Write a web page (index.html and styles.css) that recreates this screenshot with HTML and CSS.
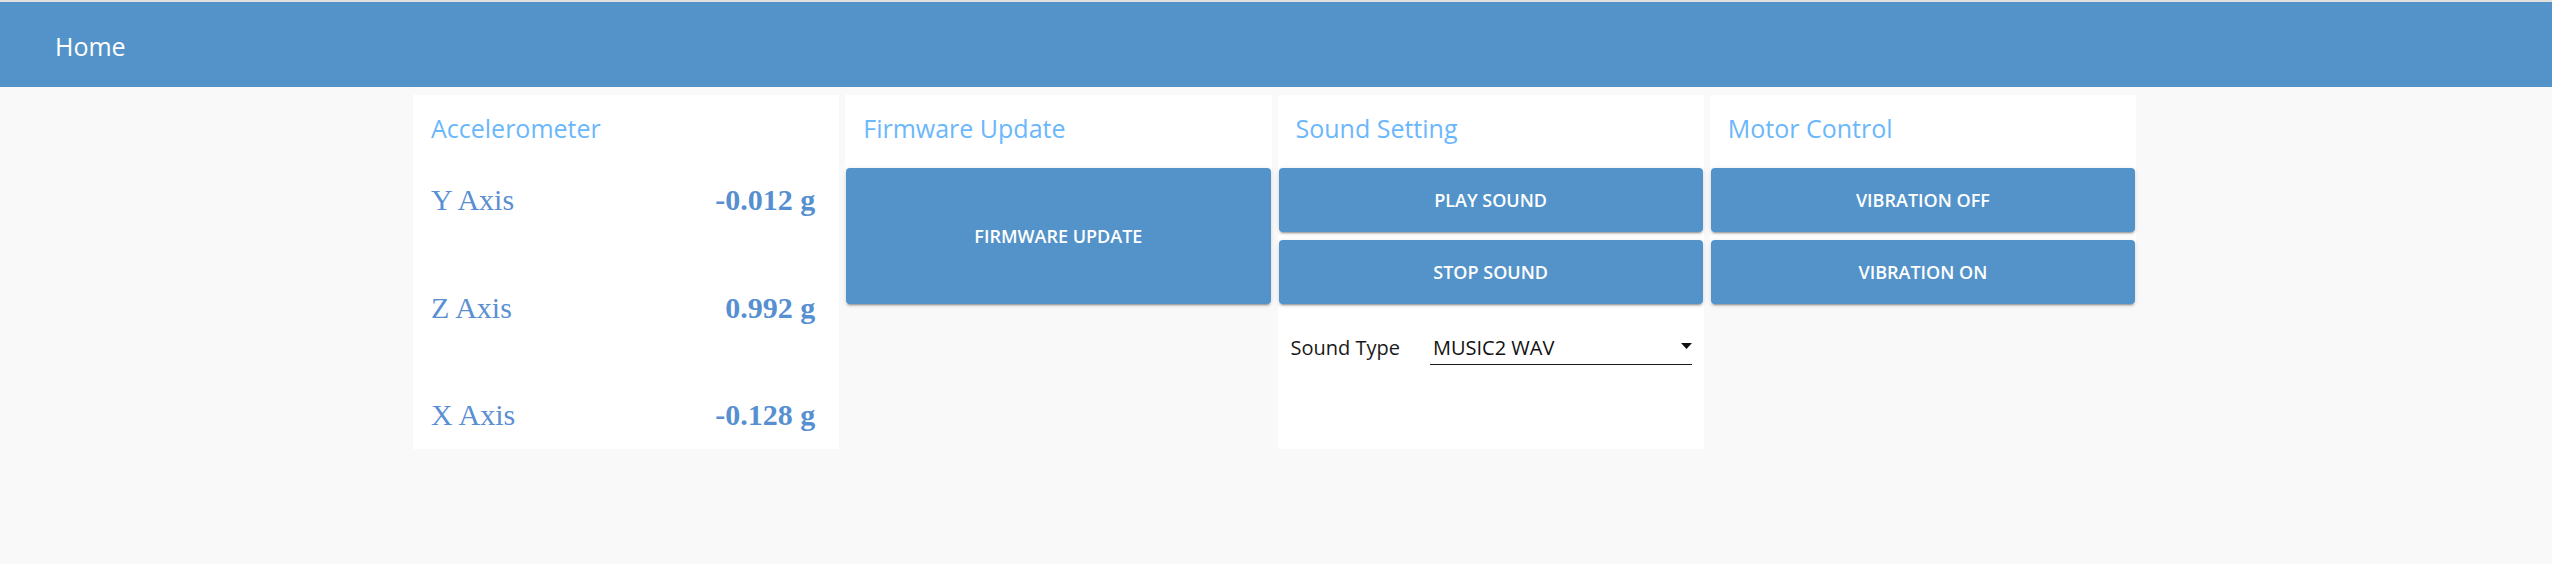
FILE: index.html
```html
<!DOCTYPE html>
<html lang="en">
<head>
<meta charset="utf-8">
<title>Home</title>
<link rel="stylesheet" href="styles.css">
</head>
<body>
<header class="appbar">
  <span class="appbar-title">Home</span>
</header>
<main class="dashboard">
  <section class="card card-accel">
    <h2 class="card-title">Accelerometer</h2>
    <div class="axes">
      <div class="axis-row"><span class="axis-label">Y Axis</span><span class="axis-value">-0.012 g</span></div>
      <div class="axis-row"><span class="axis-label">Z Axis</span><span class="axis-value">0.992 g</span></div>
      <div class="axis-row"><span class="axis-label">X Axis</span><span class="axis-value">-0.128 g</span></div>
    </div>
  </section>
  <section class="card">
    <h2 class="card-title">Firmware Update</h2>
    <div class="btn-stack">
      <button class="btn btn-tall" type="button">FIRMWARE UPDATE</button>
    </div>
  </section>
  <section class="card card-sound">
    <h2 class="card-title">Sound Setting</h2>
    <div class="btn-stack">
      <button class="btn" type="button">PLAY SOUND</button>
      <button class="btn" type="button">STOP SOUND</button>
    </div>
    <div class="field-row">
      <span class="field-label">Sound Type</span>
      <div class="select">
        <span class="select-value">MUSIC2 WAV</span>
        <svg class="select-arrow" width="11" height="6" viewBox="0 0 11 6"><path d="M0 0h11L5.5 6z" fill="#111"/></svg>
      </div>
    </div>
  </section>
  <section class="card">
    <h2 class="card-title">Motor Control</h2>
    <div class="btn-stack">
      <button class="btn" type="button">VIBRATION OFF</button>
      <button class="btn" type="button">VIBRATION ON</button>
    </div>
  </section>
</main>
</body>
</html>
```
FILE: styles.css
```css
* { box-sizing: border-box; }

html, body {
  margin: 0;
  padding: 0;
}

body {
  background: #f9f9f9;
  font-family: "Open Sans", "Noto Sans", sans-serif;
  min-height: 564px;
}

.appbar {
  border-top: 2px solid #e3dfdf;
  background: #5393c9;
  height: 87px;
  padding: 27px 0 0 55px;
}

.appbar-title {
  display: block;
  color: #ffffff;
  font-size: 25px;
  line-height: 34px;
  font-weight: 400;
}

.dashboard {
  display: grid;
  grid-template-columns: repeat(4, 1fr);
  column-gap: 6px;
  width: 1723px;
  margin: 8px 0 0 413px;
  align-items: start;
}

.card {
  background: #ffffff;
  display: flex;
  flex-direction: column;
}

.card-accel,
.card-sound {
  min-height: 354px;
}

.card-title {
  margin: 0;
  padding: 16px 18px 23px;
  font-size: 25px;
  line-height: 34px;
  font-weight: 400;
  color: #6bb7fb;
}

.axes {
  display: flex;
  flex-direction: column;
  gap: 71.5px;
  padding: 14px 24px 16px 18px;
}

.axis-row {
  display: flex;
  justify-content: space-between;
  align-items: baseline;
  font-family: "Liberation Serif", "Times New Roman", serif;
  font-size: 30px;
  line-height: 36px;
  color: #5a8fd2;
}

.axis-value {
  font-weight: 700;
  color: #5690d0;
}

.btn-stack {
  display: flex;
  flex-direction: column;
  gap: 8px;
  padding: 0 1px;
}

.btn {
  height: 64px;
  border: 0;
  border-radius: 4px;
  background: #5393c9;
  color: #ffffff;
  font-family: "Open Sans", "Noto Sans", sans-serif;
  font-size: 18px;
  font-weight: 600;
  box-shadow: 0 3px 1px -2px rgba(0,0,0,0.2), 0 2px 2px 0 rgba(0,0,0,0.14), 0 1px 5px 0 rgba(0,0,0,0.12);
  cursor: pointer;
}

.btn-tall {
  height: 136px;
}

.field-row {
  display: flex;
  align-items: baseline;
  gap: 29px;
  margin-top: 30px;
  padding: 0 12px 0 13px;
}

.field-label {
  font-size: 20px;
  line-height: 28px;
  color: #1a1a1a;
  white-space: nowrap;
}

.select {
  flex: 1;
  display: flex;
  align-items: center;
  justify-content: space-between;
  border-bottom: 1px solid #1a1a1a;
  padding: 0 0 2px 3px;
  margin-left: 1px;
}

.select-value {
  font-size: 20px;
  line-height: 28px;
  color: #111111;
}

.select-arrow {
  display: block;
  margin-bottom: 4px;
}
```
